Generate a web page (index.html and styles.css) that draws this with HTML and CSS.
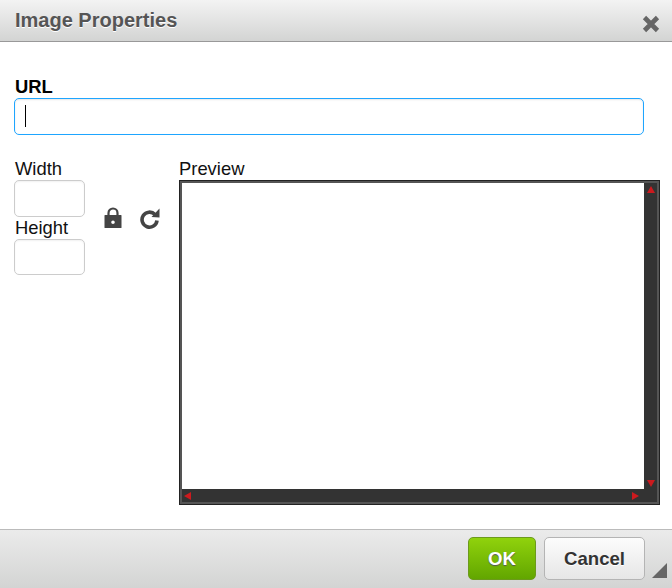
FILE: index.html
```html
<!DOCTYPE html>
<html lang="en">
<head>
    <meta charset="UTF-8">
    <meta name="viewport" content="width=device-width, initial-scale=1.0">
    <title>Image Properties</title>
    <link rel="stylesheet" href="styles.css">
</head>
<body>
    <div class="dialog">
        <div class="dialog-header">
            <h1>Image Properties</h1>
            <svg class="close-icon" width="20" height="20" viewBox="0 0 20 20">
                <path d="M3.500 3.500L16.500 16.500M16.500 3.500L3.500 16.500" stroke="#666" stroke-width="4.600" fill="none"/>
            </svg>
        </div>

        <div class="dialog-body">
            <div class="url-group">
                <label class="url-label" for="url">URL</label>
                <div class="url-input" id="url"><span class="caret"></span></div>
            </div>

            <div class="details">
                <div class="size-col">
                    <label class="field-label">Width</label>
                    <div class="size-input"></div>
                    <label class="field-label field-label-height">Height</label>
                    <div class="size-input size-input-height"></div>
                </div>

                <div class="size-tools">
                    <svg width="18" height="22" viewBox="0 0 18 22">
                        <path d="M4.500 9V6a4.500 4.500 0 0 1 9 0v3" stroke="#444" stroke-width="2.200" fill="none"/>
                        <path fill-rule="evenodd" fill="#444" d="M1 8h16a.5.5 0 0 1 .5.5v12a.5.5 0 0 1-.5.500h-16a.5.5 0 0 1-.5-.5v-12a.5.5 0 0 1 .5-.5zM9 13.500a1.800 1.800 0 1 0 0 3.600a1.800 1.800 0 0 0 0-3.600z"/>
                    </svg>
                    <svg width="20" height="22" viewBox="0 0 20 22">
                        <path d="M15 7.500A7.500 7.500 0 1 0 17 13.500" stroke="#444" stroke-width="3.600" fill="none"/>
                        <path d="M11.500 10L19.500 10.500L19.500 1.500Z" fill="#444"/>
                    </svg>
                </div>

                <div class="preview-col">
                    <label class="field-label">Preview</label>
                    <div class="preview-box">
                        <div class="preview-top">
                            <div class="preview-area"></div>
                            <div class="scroll-v">
                                <span class="arrow arrow-up"></span>
                                <span class="arrow arrow-down"></span>
                            </div>
                        </div>
                        <div class="scroll-h">
                            <span class="arrow arrow-left"></span>
                            <span class="arrow arrow-right"></span>
                        </div>
                    </div>
                </div>
            </div>
        </div>

        <div class="dialog-footer">
            <button class="btn btn-ok">OK</button>
            <button class="btn btn-cancel">Cancel</button>
            <span class="resize-grip"></span>
        </div>
    </div>
</body>
</html>
```

FILE: styles.css
```css
* {
    margin: 0;
    padding: 0;
    box-sizing: border-box;
    font-family: 'Liberation Sans', Arial, sans-serif;
}

body {
    width: 672px;
    height: 588px;
    overflow: hidden;
    background: white;
}

.dialog {
    display: flex;
    flex-direction: column;
    height: 588px;
}

.dialog-header {
    height: 42px;
    padding: 0 11px 0 15px;
    display: flex;
    align-items: center;
    justify-content: space-between;
    background: linear-gradient(180deg, #f3f3f3 0%, #d3d4d3 100%);
    border-bottom: 1px solid #999;
}

.dialog-header h1 {
    font-size: 20px;
    font-weight: bold;
    color: #555;
    text-shadow: 0 1px 0 white;
    margin-top: -1px;
}

.close-icon {
    margin-top: 6px;
}

.dialog-body {
    flex: 1;
    padding: 35px 12px 0 14px;
}

.url-label {
    display: block;
    font-size: 18.400px;
    font-weight: bold;
    color: black;
    line-height: 19px;
    margin-bottom: 2px;
    padding-left: 1px;
}

.url-input {
    width: 630px;
    height: 37px;
    border: 1px solid #1ea5ff;
    border-radius: 5px;
    padding: 6px 10px;
    box-shadow: inset 0 1px 2px rgba(0, 0, 0, 0.1);
}

.caret {
    display: block;
    width: 1px;
    height: 22px;
    background: black;
}

.details {
    display: flex;
    margin-top: 24px;
}

.size-col {
    width: 71px;
}

.field-label {
    display: block;
    font-size: 18.400px;
    line-height: 19px;
    margin-bottom: 2px;
    color: #111;
    padding-left: 1px;
}

.field-label-height {
    margin-top: 1px;
}

.size-input {
    width: 71px;
    height: 37px;
    border: 1px solid #ccc;
    border-radius: 5px;
    box-shadow: inset 0 1px 2px rgba(0, 0, 0, 0.06);
}

.size-input-height {
    height: 36px;
}

.size-tools {
    width: 94px;
    padding: 48px 0 0 19px;
    display: flex;
    gap: 18px;
    align-items: flex-start;
}

.preview-col {
    width: 481px;
}

.preview-col .field-label {
    padding-left: 0;
}

.preview-box {
    width: 481px;
    height: 325px;
    display: flex;
    flex-direction: column;
    border: 3px solid #555;
    outline: 1px solid #222;
    outline-offset: -1px;
    background: #333;
}

.preview-top {
    flex: 1;
    display: flex;
}

.preview-area {
    flex: 1;
    background: white;
}

.scroll-v {
    width: 13px;
    display: flex;
    flex-direction: column;
    justify-content: space-between;
    align-items: center;
    padding: 3px 0 2px;
}

.scroll-h {
    height: 13px;
    display: flex;
    justify-content: space-between;
    align-items: center;
    padding: 0 18px 0 2px;
}

.arrow {
    width: 0;
    height: 0;
    border-style: solid;
    border-color: transparent;
}

.arrow-up {
    border-width: 0 4px 7px;
    border-bottom-color: #cc1a1e;
}

.arrow-down {
    border-width: 7px 4px 0;
    border-top-color: #cc1a1e;
}

.arrow-left {
    border-width: 4px 7px 4px 0;
    border-right-color: #cc1a1e;
}

.arrow-right {
    border-width: 4px 0 4px 7px;
    border-left-color: #cc1a1e;
}

.dialog-footer {
    position: relative;
    height: 59px;
    padding: 7px 27px 0 0;
    display: flex;
    justify-content: flex-end;
    align-items: flex-start;
    gap: 8px;
    background: linear-gradient(180deg, #ebebeb 0%, #d3d4d3 100%);
    border-top: 1px solid #bbb;
}

.btn {
    height: 43px;
    border-radius: 5px;
    font-size: 18.600px;
    font-weight: bold;
}

.btn-ok {
    width: 68px;
    color: white;
    background: linear-gradient(180deg, #90d20c 0%, #62a600 100%);
    border: 1px solid #6c9a1c;
    text-shadow: 0 1px 1px #555;
}

.btn-cancel {
    width: 101px;
    color: #333;
    background: linear-gradient(180deg, #fcfcfc 0%, #e6e6e6 100%);
    border: 1px solid #b4b4b4;
    text-shadow: 0 1px 0 white;
}

.resize-grip {
    position: absolute;
    right: 5px;
    bottom: 10px;
    width: 0;
    height: 0;
    border-style: solid;
    border-width: 0 0 15px 15px;
    border-color: transparent transparent #666 transparent;
}
```
